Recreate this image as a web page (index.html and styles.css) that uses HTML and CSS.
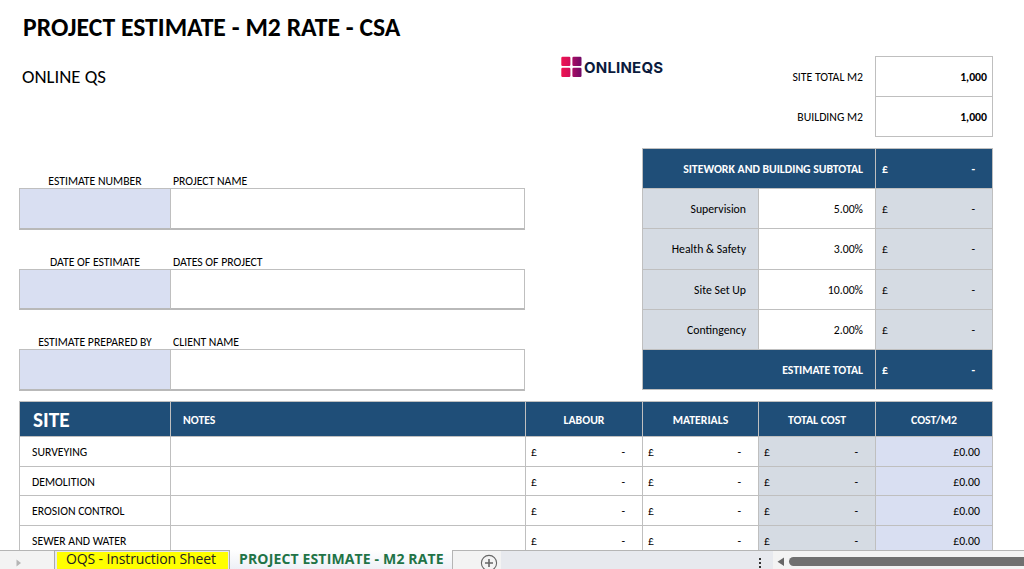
FILE: index.html
```html
<!DOCTYPE html>
<html lang="en">
<head>
    <meta charset="utf-8">
    <title>Project Estimate - M2 Rate</title>
    <link rel="stylesheet" href="styles.css">
</head>
<body>
    <main class="sheet">
        <h1><span>PROJECT ESTIMATE - M2 RATE - CSA</span></h1>

        <div class="top">
            <section class="details">
                <h2><span>ONLINE QS</span></h2>
                <div class="field">
                    <label class="center">ESTIMATE NUMBER</label><label>PROJECT NAME</label>
                    <div class="box blue"></div><div class="box"></div>
                </div>
                <div class="field">
                    <label class="center">DATE OF ESTIMATE</label><label>DATES OF PROJECT</label>
                    <div class="box blue"></div><div class="box"></div>
                </div>
                <div class="field">
                    <label class="center">ESTIMATE PREPARED BY</label><label>CLIENT NAME</label>
                    <div class="box blue"></div><div class="box"></div>
                </div>
            </section>

            <div class="logo">
                <svg width="21" height="21" viewBox="0 0 21 21">
                    <defs>
                        <linearGradient id="brand" gradientUnits="userSpaceOnUse" x1="0" y1="0" x2="21" y2="0">
                            <stop offset="0" stop-color="#f0134f"/>
                            <stop offset=".45" stop-color="#d00f5c"/>
                            <stop offset=".55" stop-color="#a80c63"/>
                            <stop offset="1" stop-color="#6c0a67"/>
                        </linearGradient>
                    </defs>
                    <g fill="url(#brand)">
                        <rect x="0.3" y="0.8" width="9.1" height="9.1" rx="1.2"/>
                        <rect x="11.4" y="0.8" width="9.1" height="9.1" rx="1.2"/>
                        <rect x="0.3" y="11.8" width="9.1" height="9.1" rx="1.2"/>
                        <rect x="11.4" y="11.8" width="9.1" height="9.1" rx="1.2"/>
                    </g>
                </svg>
                <span>ONLINEQS</span>
            </div>

            <section class="summary">
                <div class="areas">
                    <span class="area-name">SITE TOTAL M2</span><b>1,000</b>
                    <span class="area-name">BUILDING M2</span><b>1,000</b>
                </div>
                <div class="totals">
                    <div class="wide dark">SITEWORK AND BUILDING SUBTOTAL</div><div class="money dark"><span>£</span><span>-</span></div>
                    <div class="grey">Supervision</div><div>5.00%</div><div class="money grey"><span>£</span><span>-</span></div>
                    <div class="grey">Health &amp; Safety</div><div>3.00%</div><div class="money grey"><span>£</span><span>-</span></div>
                    <div class="grey">Site Set Up</div><div>10.00%</div><div class="money grey"><span>£</span><span>-</span></div>
                    <div class="grey">Contingency</div><div>2.00%</div><div class="money grey"><span>£</span><span>-</span></div>
                    <div class="wide dark">ESTIMATE TOTAL</div><div class="money dark"><span>£</span><span>-</span></div>
                </div>
            </section>
        </div>

        <div class="costs">
            <div class="row head">
                <div class="site"><span>SITE</span></div><div class="notes">NOTES</div><div>LABOUR</div><div>MATERIALS</div><div>TOTAL COST</div><div>COST/M2</div>
            </div>
            <div class="row">
                <div class="item">SURVEYING</div><div></div><div class="money"><span>£</span><span>-</span></div><div class="money"><span>£</span><span>-</span></div><div class="money grey"><span>£</span><span>-</span></div><div class="rate blue">£0.00</div>
            </div>
            <div class="row">
                <div class="item">DEMOLITION</div><div></div><div class="money"><span>£</span><span>-</span></div><div class="money"><span>£</span><span>-</span></div><div class="money grey"><span>£</span><span>-</span></div><div class="rate blue">£0.00</div>
            </div>
            <div class="row">
                <div class="item">EROSION CONTROL</div><div></div><div class="money"><span>£</span><span>-</span></div><div class="money"><span>£</span><span>-</span></div><div class="money grey"><span>£</span><span>-</span></div><div class="rate blue">£0.00</div>
            </div>
            <div class="row">
                <div class="item">SEWER AND WATER</div><div></div><div class="money"><span>£</span><span>-</span></div><div class="money"><span>£</span><span>-</span></div><div class="money grey"><span>£</span><span>-</span></div><div class="rate blue">£0.00</div>
            </div>
        </div>
    </main>

    <footer class="tabs">
        <div class="nav"><svg width="6" height="8" viewBox="0 0 6 8"><path d="M0.5 0.5L5 4L0.5 7.5Z" fill="#b5b5b5"/></svg></div>
        <div class="tab yellow"><span>OQS - Instruction Sheet</span></div>
        <div class="tab active"><span>PROJECT ESTIMATE - M2 RATE</span></div>
        <div class="add">
            <svg width="18" height="18" viewBox="0 0 18 18" fill="none" stroke="#666">
                <circle cx="9" cy="9" r="7.6" stroke-width="1.1"/>
                <path d="M9 5V13M5 9H13" stroke-width="1.6"/>
            </svg>
        </div>
        <div class="filler">
            <svg width="4" height="12" viewBox="0 0 4 12" fill="#333"><rect x="1" y="1" width="2" height="2"/><rect x="1" y="5" width="2" height="2"/><rect x="1" y="9" width="2" height="2"/></svg>
        </div>
        <div class="scroll">
            <svg width="8" height="10" viewBox="0 0 8 10"><path d="M7 0.5V9L0.5 4.8Z" fill="#666"/></svg>
            <div class="thumb"></div>
        </div>
    </footer>
</body>
</html>
```
FILE: styles.css
```css
* { box-sizing: border-box; }
body {
    margin: 0;
    height: 569px;
    overflow: hidden;
    display: flex;
    flex-direction: column;
    background: #fff;
    color: #000;
    font: 11.75px/14px Carlito, Lato, sans-serif;
}
.sheet { height: 550px; overflow: hidden; padding-left: 19px; }
h1 { margin: 0; height: 56px; padding: 12px 0 0 4px; font-size: 25.7px; line-height: 32px; }
h2 { margin: 0; height: 119px; padding: 9px 0 0 3px; font-size: 18.8px; line-height: 23px; font-weight: normal; }

.top { display: grid; grid-template-columns: 507px 116px 351px; height: 345px; }
.field { display: grid; grid-template-columns: 152px 354px; grid-template-rows: 13px 41.5px; height: 80.5px; }
.field label { padding-left: 2px; line-height: 13px; white-space: nowrap; }
.field .center { padding: 0; text-align: center; }
.box { border: 1px solid #bfbfbf; border-bottom: 2px solid #b9b9b9; }
.box + .box { border-left: none; }
.blue { background: #d9dff2; }
.grey { background: #d5dbe3; }
.dark { background: #1f4e78; color: #fff; font-weight: bold; }

.logo { display: flex; align-items: flex-start; padding-left: 35px; color: #0b1b3d; font: 700 15px/23px Inter, sans-serif; letter-spacing: 0.2px; }
.logo svg { flex: none; }
.logo span { margin-left: 2px; }

.areas { display: grid; grid-template-columns: 233px 118px; grid-template-rows: 41px 40px; margin-bottom: 11px; text-align: right; }
.areas > * { line-height: 41px; }
.area-name { padding-right: 12px; }
.areas > .area-name:first-child { line-height: 42px; }
.areas b { border: 1px solid #bfbfbf; border-top: none; padding-right: 5px; }
.areas b:nth-child(2) { border-top: 1px solid #bfbfbf; line-height: 40px; }

.totals { display: grid; grid-template-columns: 116px 117px 117px; grid-template-rows: 40px repeat(5, 40.3px); border: 1px solid #bfbfbf; border-width: 1px 0 0 1px; text-align: right; line-height: 37px; }
.totals > div { border-right: 1px solid #bfbfbf; border-bottom: 1px solid #bfbfbf; padding: 2px 12px 0 0; white-space: nowrap; }
.wide { grid-column: span 2; }
.totals > .money { padding: 2px 17px 0 6px; }
.money { display: flex; justify-content: space-between; }

.costs { width: 974px; border: 1px solid #bfbfbf; border-width: 1px 0 0 1px; }
.row { display: grid; grid-template-columns: 151px 355px 117px 116px 117px 117px; height: 29.6px; line-height: 26px; }
.row > div { border-right: 1px solid #bfbfbf; border-bottom: 1px solid #bfbfbf; padding-top: 2px; }
.head { height: 35px; line-height: 32px; background: #1f4e78; color: #fff; font-weight: bold; text-align: center; }
.head .site { padding-left: 13px; text-align: left; font-size: 21.3px; }
.head .notes { padding-left: 12px; text-align: left; }
.item { padding-left: 12px; }
.row .money { padding: 2px 17px 0 5px; }
.rate { padding-right: 12px; text-align: right; }

.tabs { display: flex; height: 19px; overflow: hidden; background: #e7e9ee; font: 14px/18px "Open Sans", sans-serif; }
.nav { width: 54px; padding: 8px 0 0 16px; border-top: 1px solid #b5b5b5; background: #f3f3f3; line-height: 0; }
.tab { white-space: nowrap; }
.yellow { width: 176px; border: 1px solid #ababab; border-bottom: none; padding: 1px 1px 0 2px; color: #222; text-indent: 9px; line-height: 14px; letter-spacing: -0.12px; background: #ff0 content-box; }
.active { width: 222px; padding-left: 9px; background: linear-gradient(#fff, #edf0f6); color: #217346; font-weight: bold; letter-spacing: 0.15px; }
.add { width: 49px; padding: 3px 0 0 27px; border: 1px solid #b5b5b5; border-width: 1px 0 0 1px; background: #f3f3f3; line-height: 0; }
.filler { width: 272px; border-top: 1px solid #b5b5b5; padding: 6px 0 0 257px; line-height: 0; }
.scroll { flex: 1; display: flex; align-items: flex-start; border-top: 1px solid #b5b5b5; padding: 6px 0 0 4px; background: #f3f3f3; }
.scroll svg { flex: none; }
.thumb { flex: 1; height: 9px; margin-left: 4px; border-radius: 5px 0 0 5px; background: #707070; }
```
